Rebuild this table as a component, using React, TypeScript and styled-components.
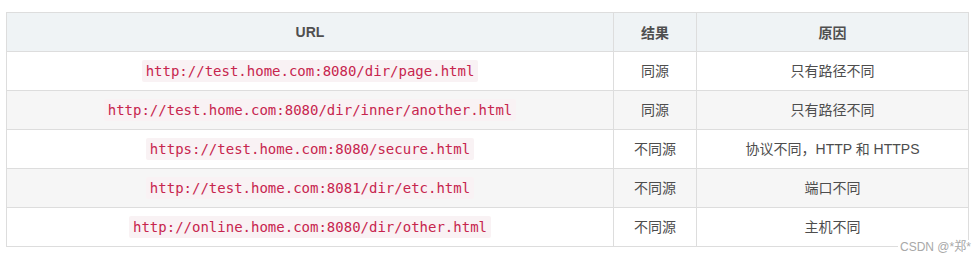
import styled, { createGlobalStyle } from 'styled-components';

const GlobalStyle = createGlobalStyle`
  html, body {
    margin: 0;
    padding: 0;
    background: #fff;
  }
  body {
    font-family: "Liberation Sans", "Noto Sans CJK SC", sans-serif;
    font-size: 14px;
    color: #4d4d4d;
  }
`;

const Wrap = styled.div`
  position: relative;
  padding: 12px 0 0 6px;
  width: 979px;
  height: 263px;
  box-sizing: border-box;
`;

const Table = styled.table`
  width: 962px;
  border-collapse: collapse;
  table-layout: fixed;
`;

const HeadCell = styled.th`
  height: 39px;
  padding: 0 8px;
  box-sizing: border-box;
  border: 1px solid #dddddd;
  background: #eff3f5;
  font-weight: 700;
  font-size: 14px;
  color: #4f4f4f;
  text-align: center;
`;

const Row = styled.tr<{ $striped: boolean }>`
  background: ${(p) => (p.$striped ? '#f6f6f6' : '#ffffff')};
`;

const Cell = styled.td`
  height: 39px;
  padding: 0 8px;
  box-sizing: border-box;
  border: 1px solid #dddddd;
  text-align: center;
  line-height: 22px;
  color: #4d4d4d;
`;

const Code = styled.code`
  display: inline-block;
  padding: 0 4px;
  line-height: 22px;
  border-radius: 2px;
  background: #f9f2f4;
  color: #c7254e;
  font-family: "DejaVu Sans Mono", "Liberation Mono", monospace;
  font-size: 14px;
`;

const Watermark = styled.div`
  position: absolute;
  left: 898px;
  top: 240px;
  padding: 0 2px;
  background: #fff;
  font-size: 12px;
  line-height: 14px;
  color: #a8a8a8;
  font-family: "Liberation Sans", "Noto Sans CJK SC", sans-serif;
`;

const rows = [
  { url: 'http://test.home.com:8080/dir/page.html', result: '同源', reason: '只有路径不同' },
  { url: 'http://test.home.com:8080/dir/inner/another.html', result: '同源', reason: '只有路径不同' },
  { url: 'https://test.home.com:8080/secure.html', result: '不同源', reason: '协议不同，HTTP 和 HTTPS' },
  { url: 'http://test.home.com:8081/dir/etc.html', result: '不同源', reason: '端口不同' },
  { url: 'http://online.home.com:8080/dir/other.html', result: '不同源', reason: '主机不同' }
];

export default function App() {
  return (
    <Wrap>
      <GlobalStyle />
      <Table>
        <colgroup>
          <col style={{ width: 607 }} />
          <col style={{ width: 83 }} />
          <col style={{ width: 272 }} />
        </colgroup>
        <thead>
          <tr>
            <HeadCell>URL</HeadCell>
            <HeadCell>结果</HeadCell>
            <HeadCell>原因</HeadCell>
          </tr>
        </thead>
        <tbody>
          {rows.map((r, i) => (
            <Row key={r.url} $striped={i % 2 === 1}>
              <Cell>
                <Code>{r.url}</Code>
              </Cell>
              <Cell>{r.result}</Cell>
              <Cell>{r.reason}</Cell>
            </Row>
          ))}
        </tbody>
      </Table>
      <Watermark>CSDN @*郑*</Watermark>
    </Wrap>
  );
}
